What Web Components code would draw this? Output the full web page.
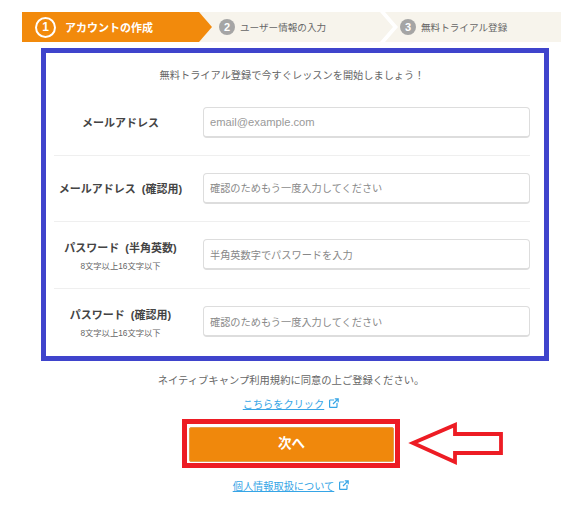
<!DOCTYPE html>
<html lang="ja">
<head>
<meta charset="utf-8">
<title>アカウントの作成</title>
<style>
  html, body { margin: 0; background: #fff; }
  body { font-family: "Liberation Sans", "Noto Sans CJK JP", sans-serif; color: #555; }
</style>
</head>
<body>
<signup-page>
  <step-bar>
    <step-item num="1" state="current">アカウントの作成</step-item>
    <step-item num="2">ユーザー情報の入力</step-item>
    <step-item num="3" state="last">無料トライアル登録</step-item>
  </step-bar>
  <form-frame intro="無料トライアル登録で今すぐレッスンを開始しましょう！">
    <form-row label="メールアドレス" placeholder="email@example.com" latin></form-row>
    <form-row label="メールアドレス (確認用)" placeholder="確認のためもう一度入力してください"></form-row>
    <form-row label="パスワード (半角英数)" note="8文字以上16文字以下" placeholder="半角英数字でパスワードを入力"></form-row>
    <form-row label="パスワード (確認用)" note="8文字以上16文字以下" placeholder="確認のためもう一度入力してください"></form-row>
  </form-frame>
  <signup-actions></signup-actions>
</signup-page>

<script>
class SignupPage extends HTMLElement {
  constructor() {
    super();
    this.attachShadow({ mode: "open" }).innerHTML = `
      <style>
        :host { display: flex; flex-direction: column; width: 580px; height: 508px; padding-top: 12px; box-sizing: border-box; overflow: hidden; }
      </style>
      <slot></slot>
    `;
  }
}

class StepBar extends HTMLElement {
  constructor() {
    super();
    this.attachShadow({ mode: "open" }).innerHTML = `
      <style>
        :host { display: flex; width: 539px; height: 30px; margin-left: 22px; background: #f7f4ec; }
      </style>
      <slot></slot>
    `;
  }
}

class StepItem extends HTMLElement {
  connectedCallback() {
    const num = this.getAttribute("num");
    this.attachShadow({ mode: "open" }).innerHTML = `
      <style>
        :host { display: flex; align-items: center; position: relative; box-sizing: border-box; width: 184px; padding-left: 5px; gap: 5px; font-size: 9.6px; color: #666; }
        :host([state="current"]) { width: 192px; padding-left: 13px; gap: 9px; font-size: 11px; font-weight: bold; color: #fff; }
        :host([state="last"]) { flex: 1; width: auto; padding-left: 2px; }
        .bg { position: absolute; inset: 0; background: #fff; clip-path: polygon(calc(100% - 18px) 0, calc(100% - 13px) 0, 100% 50%, calc(100% - 13px) 100%, calc(100% - 18px) 100%, calc(100% - 5px) 50%); }
        :host([state="current"]) .bg { background: #f28a0c; clip-path: polygon(0 0, calc(100% - 15px) 0, calc(100% - 2px) 50%, calc(100% - 15px) 100%, 0 100%); }
        :host([state="last"]) .bg { display: none; }
        .num { position: relative; display: flex; align-items: center; justify-content: center; width: 16px; height: 16px; border-radius: 50%; background: #a5a5a5; color: #fff; font-size: 11px; font-weight: bold; }
        :host([state="current"]) .num { box-sizing: border-box; width: 21px; height: 21px; background: none; border: 2px solid #fff; font-size: 12px; }
        .text { position: relative; white-space: nowrap; }
      </style>
      <div class="bg"></div>
      <span class="num">${num}</span>
      <span class="text"><slot></slot></span>
    `;
  }
}

class FormFrame extends HTMLElement {
  connectedCallback() {
    this.attachShadow({ mode: "open" }).innerHTML = `
      <style>
        :host { display: block; box-sizing: border-box; width: 508px; height: 313px; margin: 6px 0 0 41px; border: 5px solid #3f44cc; padding: 0 14px 0 8px; }
        .intro { margin: 0; box-sizing: border-box; height: 36px; padding-top: 9px; text-align: center; line-height: 27px; font-size: 10.2px; color: #666; }
      </style>
      <p class="intro">${this.getAttribute("intro")}</p>
      <slot></slot>
    `;
  }
}

class FormRow extends HTMLElement {
  connectedCallback() {
    const note = this.getAttribute("note");
    this.attachShadow({ mode: "open" }).innerHTML = `
      <style>
        :host { display: flex; align-items: center; height: 66.5px; box-sizing: border-box; border-bottom: 1px solid #efefef; }
        :host(:first-of-type) { padding-top: 2px; }
        :host(:first-of-type) .label { margin-top: -2px; }
        :host(:last-child) { border-bottom: 0; }
        .label { flex: 0 0 149px; padding-right: 16px; box-sizing: border-box; text-align: center; }
        .name { font-size: 11px; word-spacing: 3px; font-weight: bold; color: #444; white-space: nowrap; }
        .note { margin-top: 4px; font-size: 8.3px; color: #666; white-space: nowrap; }
        .field { flex: 1; box-sizing: border-box; height: 31px; display: flex; align-items: center; padding-left: 6px; border: 1px solid #ddd; border-bottom-width: 2px; border-radius: 4px; background: #fff; font-size: 10.2px; color: #888; white-space: nowrap; }
        :host([latin]) .field { font-size: 11.2px; color: #999; }
      </style>
      <div class="label">
        <div class="name">${this.getAttribute("label")}</div>
        ${note ? `<div class="note">${note}</div>` : ""}
      </div>
      <div class="field">${this.getAttribute("placeholder")}</div>
    `;
  }
}

class OutLink extends HTMLElement {
  constructor() {
    super();
    this.attachShadow({ mode: "open" }).innerHTML = `
      <style>
        :host { display: flex; align-items: center; justify-content: center; gap: 5px; font-size: 10.2px; color: #36a5e6; }
        a { color: inherit; text-decoration: underline; }
        svg { width: 10px; height: 10px; }
      </style>
      <a href="#"><slot></slot></a>
      <svg viewBox="0 0 10 10" fill="none" stroke="currentColor" stroke-width="1.2">
        <path d="M5 2H1.2a.6.6 0 0 0-.6.6v6.2a.6.6 0 0 0 .6.6h6.2a.6.6 0 0 0 .6-.6V5"/>
        <path d="M4 6 9 1M5.8 .8h3.4v3.4"/>
      </svg>
    `;
  }
}

class SignupActions extends HTMLElement {
  constructor() {
    super();
    this.attachShadow({ mode: "open" }).innerHTML = `
      <style>
        :host { display: flex; flex-direction: column; align-items: center; position: relative; width: 500px; margin-left: 41px; padding-top: 13px; }
        .consent { margin: 0; height: 14px; line-height: 14px; font-size: 10.3px; color: #666; white-space: nowrap; }
        out-link { margin-top: 8px; height: 14px; }
        .outline { box-sizing: border-box; width: 218px; height: 49px; margin-top: 9px; padding: 3px 1px 1px 2px; border: 5px solid #ed1c24; background: #fff; }
        button { display: block; width: 100%; height: 100%; border: 1px solid #e0a050; border-radius: 2px; background: #f0880c; color: #fff; font: bold 13.5px/28px "Liberation Sans", "Noto Sans CJK JP", sans-serif; padding: 0 0 2px; }
        out-link.last { margin-top: 10px; }
        svg.arrow { position: absolute; left: 366px; top: 60px; width: 96px; height: 44px; }
      </style>
      <p class="consent">ネイティブキャンプ利用規約に同意の上ご登録ください。</p>
      <out-link>こちらをクリック</out-link>
      <div class="outline"><button type="button">次へ</button></div>
      <out-link class="last">個人情報取扱について</out-link>
      <svg class="arrow" viewBox="0 0 96 44" fill="#fff" stroke="#ed1c24" stroke-width="3.8">
        <path d="M6 22 48 4V13H94V32H48V41Z"/>
      </svg>
    `;
  }
}

customElements.define("signup-page", SignupPage);
customElements.define("step-bar", StepBar);
customElements.define("step-item", StepItem);
customElements.define("form-frame", FormFrame);
customElements.define("form-row", FormRow);
customElements.define("out-link", OutLink);
customElements.define("signup-actions", SignupActions);
</script>
</body>
</html>
